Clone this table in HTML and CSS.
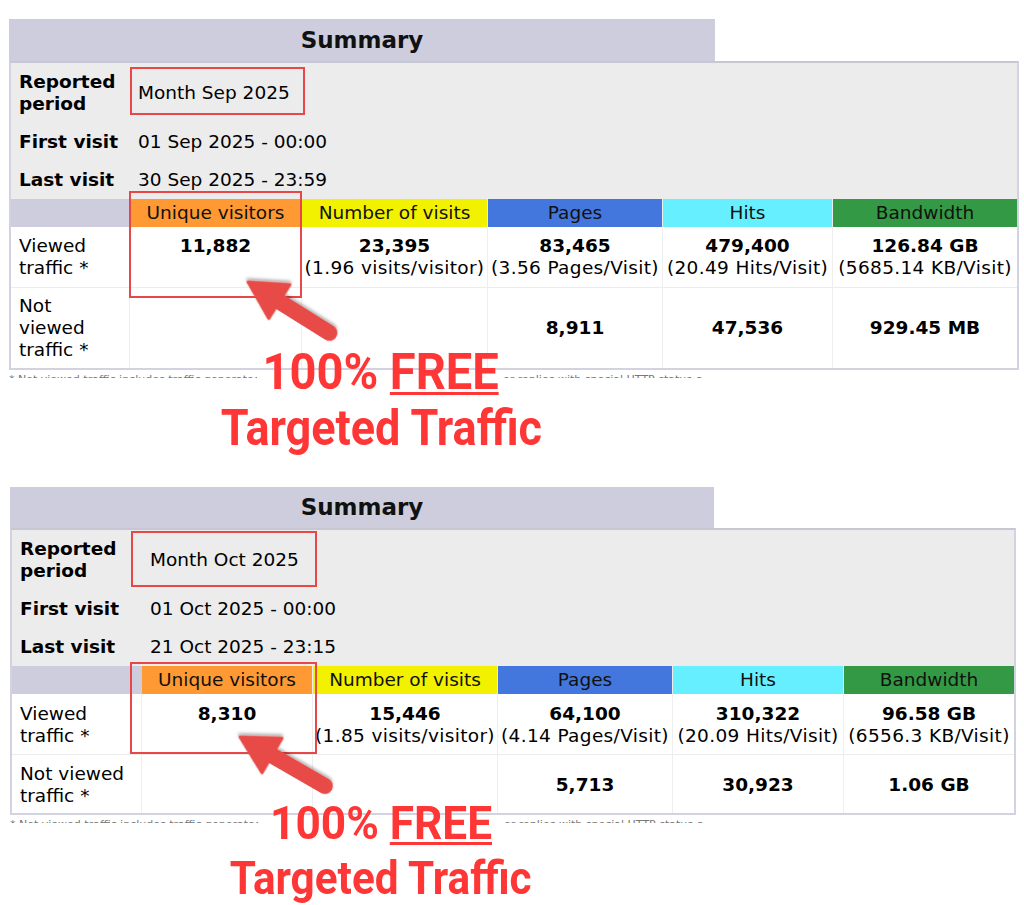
FILE: index.html
```html
<!DOCTYPE html>
<html lang="en">
<head>
<meta charset="utf-8">
<title>Summary</title>
<link rel="stylesheet" href="styles.css">
</head>
<body>
<section class="panel panel-sep">
  <div class="tab">Summary</div>
  <div class="frame">
    <table class="summary">
      <colgroup>
        <col class="c-label"><col class="c-u"><col class="c-v"><col class="c-p"><col class="c-h"><col class="c-k">
      </colgroup>
      <tr class="info"><th>Reported<br>period</th><td colspan="5">Month Sep 2025</td></tr>
      <tr class="info"><th>First visit</th><td colspan="5">01 Sep 2025 - 00:00</td></tr>
      <tr class="info"><th>Last visit</th><td colspan="5">30 Sep 2025 - 23:59</td></tr>
      <tr class="head">
        <td class="blank"></td>
        <td class="hu">Unique visitors</td>
        <td class="hv">Number of visits</td>
        <td class="hp">Pages</td>
        <td class="hh">Hits</td>
        <td class="hk">Bandwidth</td>
      </tr>
      <tr class="data viewed">
        <td class="label">Viewed traffic *</td>
        <td><b>11,882</b></td>
        <td><b>23,395</b><br><span class="sub">(1.96&nbsp;visits/visitor)</span></td>
        <td><b>83,465</b><br><span class="sub">(3.56&nbsp;Pages/Visit)</span></td>
        <td><b>479,400</b><br><span class="sub">(20.49&nbsp;Hits/Visit)</span></td>
        <td><b>126.84 GB</b><br><span class="sub">(5685.14&nbsp;KB/Visit)</span></td>
      </tr>
      <tr class="data notviewed">
        <td class="label">Not viewed traffic *</td>
        <td></td>
        <td></td>
        <td><b>8,911</b></td>
        <td><b>47,536</b></td>
        <td><b>929.45 MB</b></td>
      </tr>
    </table>
  </div>
  <div class="footnote">
    <span class="fn-left">* Not viewed traffic includes traffic generated</span>
    <span class="fn-right">or replies with special HTTP status codes.</span>
  </div>
  <div class="caption">
    <div class="cap-row"><span class="cap-line cap-a">100% <u>FREE</u></span></div>
    <div class="cap-row"><span class="cap-line cap-b">Targeted Traffic</span></div>
  </div>
  <div class="mark mark-period"></div>
  <div class="mark mark-unique"></div>
  <svg class="arrow" width="1024" height="460" viewBox="0 0 1024 460" aria-hidden="true">
    <defs>
      <filter id="sh1" x="-20%" y="-20%" width="140%" height="140%">
        <feDropShadow dx="1.5" dy="2" stdDeviation="1.5" flood-color="#000" flood-opacity="0.3"/>
      </filter>
    </defs>
    <g transform="translate(248 282) rotate(212)" filter="url(#sh1)">
      <line x1="-32" y1="0" x2="-96" y2="0" stroke="#E84B46" stroke-width="16" stroke-linecap="round"/>
      <polygon points="0,0 -37,-20 -37,20" fill="#E84B46" stroke="#E84B46" stroke-width="3" stroke-linejoin="round"/>
    </g>
  </svg>
</section>

<section class="panel panel-oct">
  <div class="tab">Summary</div>
  <div class="frame">
    <table class="summary">
      <colgroup>
        <col class="c-label"><col class="c-u"><col class="c-v"><col class="c-p"><col class="c-h"><col class="c-k">
      </colgroup>
      <tr class="info"><th>Reported<br>period</th><td colspan="5">Month Oct 2025</td></tr>
      <tr class="info"><th>First visit</th><td colspan="5">01 Oct 2025 - 00:00</td></tr>
      <tr class="info"><th>Last visit</th><td colspan="5">21 Oct 2025 - 23:15</td></tr>
      <tr class="head">
        <td class="blank"></td>
        <td class="hu">Unique visitors</td>
        <td class="hv">Number of visits</td>
        <td class="hp">Pages</td>
        <td class="hh">Hits</td>
        <td class="hk">Bandwidth</td>
      </tr>
      <tr class="data viewed">
        <td class="label">Viewed traffic *</td>
        <td><b>8,310</b></td>
        <td><b>15,446</b><br><span class="sub">(1.85&nbsp;visits/visitor)</span></td>
        <td><b>64,100</b><br><span class="sub">(4.14&nbsp;Pages/Visit)</span></td>
        <td><b>310,322</b><br><span class="sub">(20.09&nbsp;Hits/Visit)</span></td>
        <td><b>96.58 GB</b><br><span class="sub">(6556.3&nbsp;KB/Visit)</span></td>
      </tr>
      <tr class="data notviewed">
        <td class="label">Not viewed traffic *</td>
        <td></td>
        <td></td>
        <td><b>5,713</b></td>
        <td><b>30,923</b></td>
        <td><b>1.06 GB</b></td>
      </tr>
    </table>
  </div>
  <div class="footnote">
    <span class="fn-left">* Not viewed traffic includes traffic generated</span>
    <span class="fn-right">or replies with special HTTP status codes.</span>
  </div>
  <div class="caption">
    <div class="cap-row"><span class="cap-line cap-a">100% <u>FREE</u></span></div>
    <div class="cap-row"><span class="cap-line cap-b">Targeted Traffic</span></div>
  </div>
  <div class="mark mark-period"></div>
  <div class="mark mark-unique"></div>
  <svg class="arrow" width="1024" height="420" viewBox="0 0 1024 420" aria-hidden="true">
    <defs>
      <filter id="sh2" x="-20%" y="-20%" width="140%" height="140%">
        <feDropShadow dx="1.5" dy="2" stdDeviation="1.5" flood-color="#000" flood-opacity="0.3"/>
      </filter>
    </defs>
    <g transform="translate(240 250) rotate(210)" filter="url(#sh2)">
      <line x1="-32" y1="0" x2="-98" y2="0" stroke="#E84B46" stroke-width="16" stroke-linecap="round"/>
      <polygon points="0,0 -37,-20 -37,20" fill="#E84B46" stroke="#E84B46" stroke-width="3" stroke-linejoin="round"/>
    </g>
  </svg>
</section>
</body>
</html>
```

FILE: styles.css
```css
* { box-sizing: border-box; }

html, body {
  margin: 0;
  padding: 0;
  background: #ffffff;
}

body {
  width: 1024px;
  height: 905px;
  overflow: hidden;
  font-family: "DejaVu Sans", Verdana, sans-serif;
  color: #000;
}

.panel {
  position: relative;
}

.panel-sep {
  padding-top: 19px;
  padding-left: 9px;
}

.panel-oct {
  margin-top: 31px;
  padding-left: 10px;
}

.tab {
  background: #CDCDDD;
  height: 42px;
  line-height: 42px;
  text-align: center;
  font-weight: bold;
  font-size: 23px;
  color: #111;
}

.panel-sep .tab { width: 706px; }
.panel-oct .tab { width: 704px; height: 41px; line-height: 41px; }

.frame {
  border: 2px solid #D2D2E0;
  border-top-color: #C6C6D4;
  background: #ECECEC;
}

.panel-sep .frame { width: 1010px; }
.panel-oct .frame { width: 1006px; }

.summary {
  width: 100%;
  table-layout: fixed;
  border-collapse: separate;
  border-spacing: 0;
  font-size: 18.5px;
  line-height: 22px;
}

.panel-sep .c-label { width: 119px; }
.panel-sep .c-u { width: 172px; }
.panel-sep .c-v { width: 186px; }
.panel-sep .c-p { width: 175px; }
.panel-sep .c-h { width: 170px; }
.panel-sep .c-k { width: 184px; }

.panel-oct .c-label { width: 130px; }
.panel-oct .c-u { width: 171px; }
.panel-oct .c-v { width: 185px; }
.panel-oct .c-p { width: 175px; }
.panel-oct .c-h { width: 171px; }
.panel-oct .c-k { width: 170px; }

.summary td, .summary th {
  padding: 0;
}

.info th {
  text-align: left;
  font-weight: bold;
  padding: 8px 8px;
  vertical-align: middle;
}

.info td {
  padding: 8px 8px;
  vertical-align: middle;
  white-space: nowrap;
}

.head td {
  text-align: center;
  padding: 3px 0;
  border-right: 1px solid #ECECEC;
  white-space: nowrap;
  color: #111;
}

.head td:last-child { border-right: 0; }

.head .blank { background: #CDCDDD; border-right: 0; }
.head .hu { background: #FF9933; }
.head .hv { background: #F2F200; }
.head .hp { background: #4477DD; }
.head .hh { background: #66F0FF; }
.head .hk { background: #339944; }

.data td {
  background: #FFFFFF;
  text-align: center;
  border-right: 1px solid #EEEEEE;
  white-space: nowrap;
  padding: 0 1px;
}

.data td:last-child { border-right: 0; }

.data td.label {
  text-align: left;
  white-space: normal;
  padding-left: 8px;
  padding-right: 8px;
}

.sub {
  letter-spacing: 0.35px;
}

.viewed td {
  vertical-align: top;
  padding-top: 8px;
  padding-bottom: 8px;
  border-bottom: 1px solid #ECECEC;
}

.panel-oct .viewed td {
  padding-top: 9px;
  padding-bottom: 7px;
}

.notviewed td {
  vertical-align: middle;
  padding-top: 7px;
  padding-bottom: 7px;
}

.panel-oct .notviewed td {
  padding-top: 8px;
  padding-bottom: 6px;
}

.data b { font-weight: bold; }

.footnote {
  display: flex;
  margin-top: 3px;
  height: 5px;
  overflow: hidden;
  font-size: 11px;
  line-height: 13px;
  color: #777;
  white-space: nowrap;
}

.fn-left {
  width: 248px;
  overflow: hidden;
}

.fn-right {
  margin-left: 246px;
  width: 200px;
  overflow: hidden;
}

.caption {
  width: 762px;
  margin-left: -9px;
  text-align: center;
  font-family: Roboto, "Liberation Sans", sans-serif;
  font-weight: 700;
  color: #FF3636;
}

.panel-sep .caption {
  margin-top: -34px;
  font-size: 50px;
  line-height: 56px;
}

.panel-oct .caption {
  margin-left: -10px;
  margin-top: -28px;
  font-size: 47px;
  line-height: 55px;
}

.cap-row {
  white-space: nowrap;
}

.cap-line {
  display: inline-block;
  white-space: nowrap;
}

.cap-a { transform: scaleX(0.94); }
.cap-b { transform: scaleX(0.9); }

.cap-line u {
  text-decoration: underline;
  text-decoration-thickness: 3px;
  text-underline-offset: 3px;
}

.mark {
  position: absolute;
  border: 2px solid #E8474A;
}

.panel-sep .mark-period { left: 130px; top: 67px; width: 175px; height: 48px; }
.panel-sep .mark-unique { left: 129px; top: 191px; width: 173px; height: 107px; }
.panel-oct .mark-period { left: 131px; top: 44px; width: 186px; height: 56px; }
.panel-oct .mark-unique { left: 130px; top: 175px; width: 187px; height: 92px; }

.arrow {
  position: absolute;
  left: 0;
  top: 0;
  overflow: visible;
}
```
